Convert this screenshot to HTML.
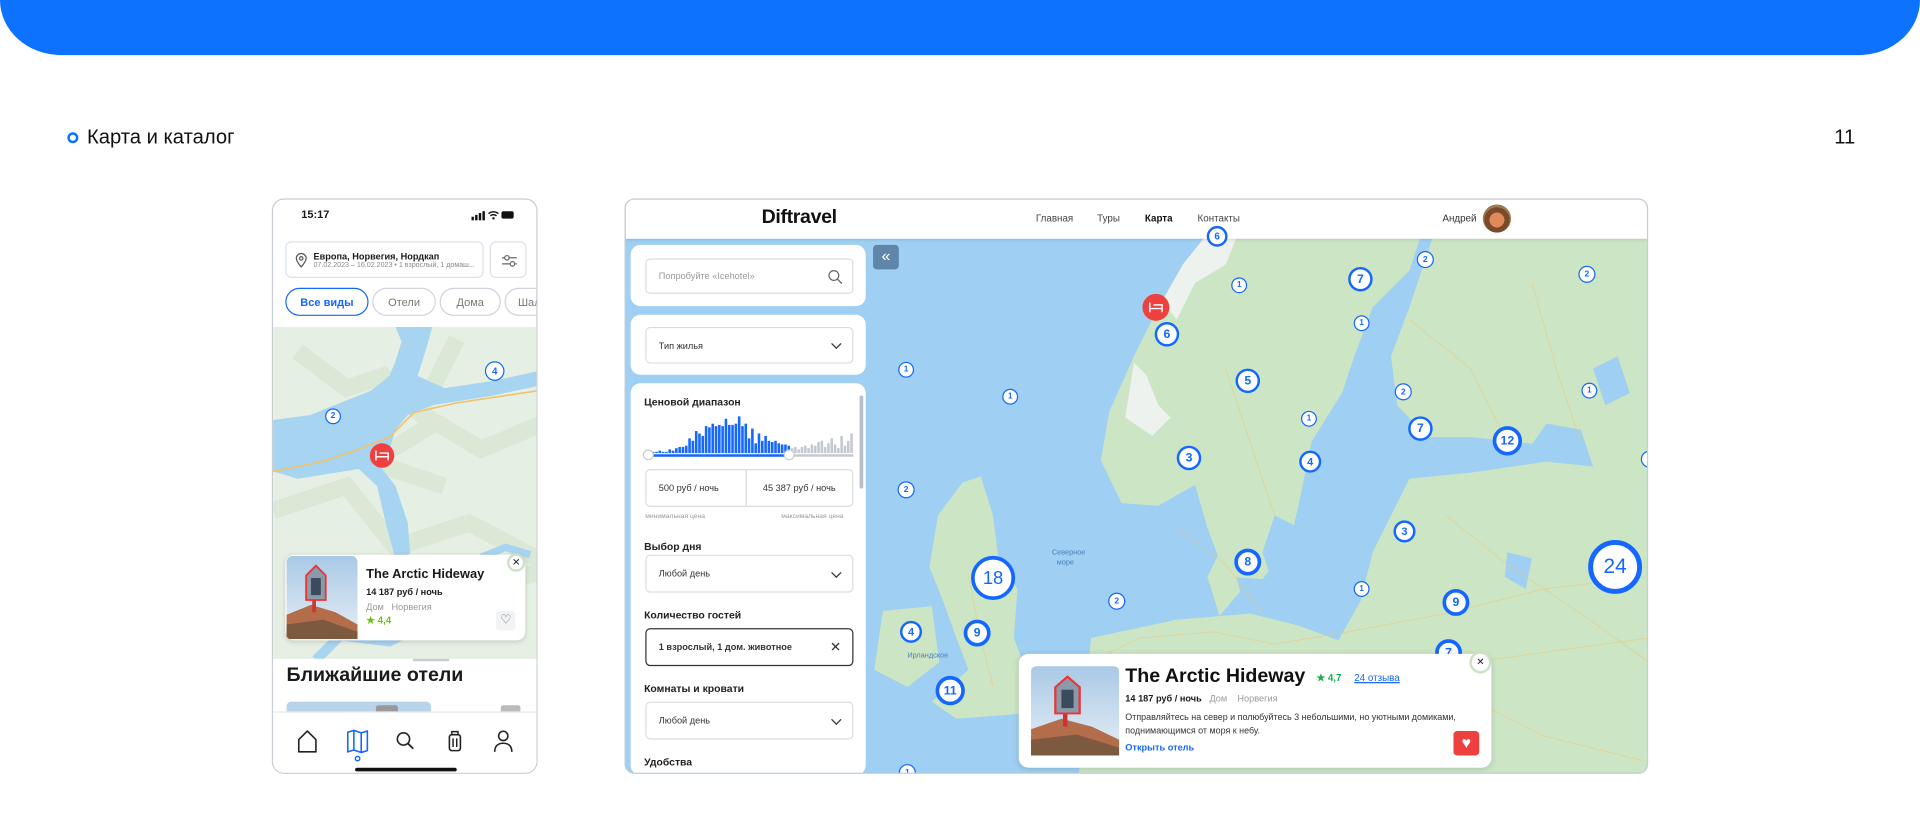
<!DOCTYPE html>
<html><head><meta charset="utf-8">
<style>
*{box-sizing:border-box;margin:0;padding:0}
html,body{width:1920px;height:818px;overflow:hidden;background:#fff;font-family:"Liberation Sans",sans-serif;color:#1a1a1a}
#s{position:absolute;left:0;top:0;width:1568px;height:668px;transform:scale(1.22449);transform-origin:0 0}
.a{position:absolute}
.band{left:0;top:0;width:1568px;height:45px;background:#0d73ff;border-radius:0 0 50px 50px/0 0 45px 45px}
.cl{position:absolute;border-radius:50%;background:#fff;border:2.5px solid #1467ff;color:#1467ff;display:flex;align-items:center;justify-content:center;font-weight:bold;transform:translate(-50%,-50%)}
.lbl{font-size:8.5px;font-weight:bold;color:#222}
.box{position:absolute;border:1px solid #d9dde3;border-radius:4px;background:#fff;font-size:7.5px;color:#333;display:flex;align-items:center;padding-left:10px}
.chev{position:absolute;right:10px;top:50%;width:6px;height:6px;border-right:1.4px solid #333;border-bottom:1.4px solid #333;transform:translateY(-70%) rotate(45deg)}
.panel{position:absolute;left:4px;width:192px;background:#fff;border-radius:8px}
.chip{position:absolute;top:235px;height:23px;border:1px solid #cfd4da;border-radius:12px;font-size:9px;color:#777;display:flex;align-items:center;justify-content:center}
</style></head><body>
<div id="s">
<div class="a band"></div>
<div class="a" style="left:55px;top:108px;width:9px;height:9px;border:2.2px solid #0d73ff;border-radius:50%"></div>
<div class="a" style="left:71px;top:103px;font-size:16.5px;color:#111">Карта и каталог</div>
<div class="a" style="left:1498px;top:103px;font-size:16.5px;color:#111">11</div>

<!-- PHONE -->
<div class="a" style="left:222px;top:162px;width:217px;height:470px;border:1px solid #c8cdd4;border-radius:10px;overflow:hidden;background:#fff">
 <div class="a" style="left:23px;top:7px;font-size:9px;font-weight:bold">15:17</div>
 <svg class="a" style="left:162px;top:8px" width="36" height="9" viewBox="0 0 36 9"><rect x="0" y="6" width="2" height="3" fill="#111"/><rect x="3" y="4.5" width="2" height="4.5" fill="#111"/><rect x="6" y="3" width="2" height="6" fill="#111"/><rect x="9" y="1.5" width="2" height="7.5" fill="#111"/><path d="M14 3.5a6 6 0 0 1 8 0M15.5 5.3a3.5 3.5 0 0 1 5 0" stroke="#111" stroke-width="1.2" fill="none"/><circle cx="18" cy="7.3" r="1" fill="#111"/><rect x="24.5" y="1.5" width="10" height="6" rx="1.5" fill="#111"/></svg>
 <div class="a" style="left:10px;top:34px;width:162px;height:30px;border:1px solid #dde1e6;border-radius:5px">
  <svg class="a" style="left:7px;top:8px" width="10" height="13" viewBox="0 0 10 13"><path d="M5 12C2 8.5 1 6.5 1 5a4 4 0 0 1 8 0c0 1.5-1 3.5-4 7z" fill="none" stroke="#555" stroke-width="1"/><circle cx="5" cy="5" r="1.4" fill="none" stroke="#555" stroke-width="1"/></svg>
  <div class="a" style="left:22px;top:7px;font-size:7.5px;font-weight:bold;white-space:nowrap">Европа, Норвегия, Нордкап</div>
  <div class="a" style="left:22px;top:16px;font-size:5.8px;color:#888;white-space:nowrap">07.02.2023 – 16.02.2023 • 1 взрослый, 1 домаш...</div>
 </div>
 <div class="a" style="left:177px;top:34px;width:30px;height:30px;border:1px solid #dde1e6;border-radius:5px">
  <svg class="a" style="left:8px;top:9px" width="14" height="12" viewBox="0 0 14 12"><path d="M1 3.5h12M1 8.5h12" stroke="#666" stroke-width="1"/><circle cx="5" cy="3.5" r="1.8" fill="#fff" stroke="#666"/><circle cx="9.5" cy="8.5" r="1.8" fill="#fff" stroke="#666"/></svg>
 </div>
 <div class="chip" style="left:10px;width:68px;border:1.5px solid #1467ff;color:#1467ff;font-weight:bold;top:72px">Все виды</div>
 <div class="chip" style="left:81px;width:52px;top:72px">Отели</div>
 <div class="chip" style="left:136px;width:50px;top:72px">Дома</div>
 <div class="chip" style="left:189px;width:50px;top:72px;justify-content:flex-start;padding-left:10px">Шале</div>
 <svg class="a" style="left:0;top:104px" width="217" height="272" viewBox="0 0 217 272">
  <rect width="217" height="272" fill="#e6efe3"/>
  <path d="M20 20l40 30 30-10 40 40-50 30 60 20M150 10l-30 60 50 30 47-20M0 150l60-20 40 50 60-20 57 30M30 230l50-30 70 20 67-20" stroke="#d6e6d0" stroke-width="14" fill="none" opacity=".7"/>
  <path d="M0 76 L30 72 55 62 80 52 95 40 100 28 105 12 100 0 130 0 125 18 118 40 140 50 180 44 217 36 217 48 180 56 130 64 110 72 100 84 95 100 86 112 100 130 110 160 112 185 100 190 92 160 85 130 70 116 45 120 20 124 0 118Z" fill="#a7d4f0"/>
  <path d="M0 118 L40 110 70 100 95 90 115 70 150 62 217 52" stroke="#f2c26a" stroke-width="1.3" fill="none"/>
  <path d="M170 188 l20 -8 20 6" stroke="#a7d4f0" stroke-width="6" fill="none"/>
  <path d="M35 272 l20-20 40 5 30-15 60 5" stroke="#a7d4f0" stroke-width="8" fill="none"/>
 </svg>
 <div class="cl" style="left:181px;top:140px;width:16px;height:16px;font-size:8px;border-width:1.8px">4</div>
 <div class="cl" style="left:49px;top:177px;width:13px;height:13px;font-size:7px;border-width:1.5px">2</div>
 <div class="a" style="left:79px;top:199px;width:20px;height:20px;border-radius:50%;background:#ef4040"></div>
 <svg class="a" style="left:83px;top:204px" width="12" height="10" viewBox="0 0 12 10"><path d="M1 1v8M1 6h10v3M4 3h7v3" stroke="#fff" stroke-width="1.2" fill="none"/></svg>
 <div class="a" style="left:10px;top:290px;width:196px;height:70px;background:#fff;border-radius:7px;box-shadow:0 1px 4px rgba(0,0,0,.15);overflow:hidden">
  <svg class="a" style="left:1px;top:1px" width="58" height="68" viewBox="0 0 58 68"><defs><linearGradient id="sk" x1="0" y1="0" x2="0" y2="1"><stop offset="0" stop-color="#a9c9e6"/><stop offset="1" stop-color="#e6eef5"/></linearGradient></defs><rect width="58" height="68" rx="5" fill="url(#sk)"/><path d="M0 48 20 40 40 46 58 56 58 68 0 68Z" fill="#b46d4a"/><path d="M0 56 30 52 58 62 58 68 0 68Z" fill="#7d5a3f"/><rect x="21" y="36" width="3" height="10" fill="#c33"/><path d="M16 16 24 8 32 16 32 36 16 36Z" fill="#8a9aab" stroke="#e33" stroke-width="1.5"/><path d="M20 18h8v14h-8z" fill="#3b4a5c"/></svg>
  <div class="a" style="left:66px;top:10px;font-size:10.5px;font-weight:bold">The Arctic Hideway</div>
  <div class="a" style="left:66px;top:26px;font-size:7.5px;font-weight:bold">14 187 руб / ночь</div>
  <div class="a" style="left:66px;top:38px;font-size:7.5px;color:#999">Дом &nbsp; Норвегия</div>
  <div class="a" style="left:66px;top:49px;font-size:8px;font-weight:bold;color:#6bbf1a">★ 4,4</div>
  <div class="a" style="left:172px;top:46px;width:16px;height:16px;background:#f2f3f5;border-radius:3px;color:#666;font-size:10px;text-align:center;line-height:16px">♡</div>
 </div>
 <div class="a" style="left:191px;top:289px;width:15px;height:15px;border-radius:50%;background:#fff;border:2px solid #cfe0c9;font-size:8px;text-align:center;line-height:11px;color:#222">✕</div>
 <div class="a" style="left:0;top:375px;width:217px;height:100px;background:#fff"></div>
 <div class="a" style="left:114px;top:375px;width:30px;height:2px;background:#c9ccd2;border-radius:1px"></div>
 <div class="a" style="left:11px;top:380px;font-size:16px;font-weight:bold;color:#1a1a1a">Ближайшие отели</div>
 <div class="a" style="left:11px;top:410px;width:118px;height:10px;background:#b9d3ea;border-radius:4px 4px 0 0"></div>
 <div class="a" style="left:84px;top:413px;width:18px;height:7px;background:#999;border-radius:2px"></div>
 <div class="a" style="left:186px;top:413px;width:16px;height:7px;background:#bbb;border-radius:2px"></div>
 <div class="a" style="left:0;top:418px;width:217px;height:60px;background:#fff;border-top:1px solid #e6e8eb"></div>
 <svg class="a" style="left:0;top:418px" width="217" height="52" viewBox="0 0 217 52">
  <path d="M21 23 28 16 35 23 35 33 21 33Z" stroke="#222" stroke-width="1.3" fill="none" stroke-linejoin="round"/>
  <path d="M61 17 66 15.5 72 17.5 77 16 77 32 72 33.5 66 31.5 61 33Z M66 15.5v16M72 17.5v16" stroke="#1467ff" stroke-width="1.3" fill="none" stroke-linejoin="round"/>
  <circle cx="69" cy="38.5" r="1.8" fill="none" stroke="#1467ff" stroke-width="1.2"/>
  <circle cx="106.5" cy="22.5" r="5" stroke="#222" stroke-width="1.3" fill="none"/><path d="M110 26l4.5 4.5" stroke="#222" stroke-width="1.5"/>
  <rect x="144" y="19" width="9" height="13" rx="2" stroke="#222" stroke-width="1.3" fill="none"/><path d="M146 19v-2.5h5V19M147 22v7M150 22v7" stroke="#222" stroke-width="1.2" fill="none"/>
  <circle cx="188" cy="20" r="3.8" stroke="#222" stroke-width="1.3" fill="none"/><path d="M181 33c0-5 3-7 7-7s7 2 7 7" stroke="#222" stroke-width="1.3" fill="none"/>
 </svg>
 <div class="a" style="left:67px;top:464px;width:83px;height:3px;background:#111;border-radius:2px"></div>
</div>

<!-- DESKTOP -->
<div class="a" style="left:510px;top:162px;width:836px;height:470px;border:1px solid #c8cdd4;border-radius:8px;overflow:hidden;background:#a4d1f1">
 <svg class="a" style="left:0;top:0" width="836" height="470" viewBox="510 162 836 470">
  <rect x="510" y="162" width="836" height="470" fill="#9fcff2"/>
  <path d="M985 190 965 215 945 250 925 290 905 335 898 375 915 410 945 412 975 395 985 430 1000 470 1030 472 1052 445 1062 400 1070 360 1095 320 1105 290 1120 250 1150 220 1160 190Z" fill="#cbe5c5"/>
  <path d="M985 190 965 215 948 245 960 260 975 230 1000 215 1010 190Z M925 295 935 305 945 330 955 340 940 355 918 340Z" fill="#eef2ee"/>
  <path d="M1170 190 1346 190 1346 632 880 632 890 520 960 505 1020 500 1060 510 1092 522 1110 490 1120 450 1140 410 1150 390 1200 385 1262 376 1256 362 1200 356 1165 356 1140 330 1135 290 1150 250Z" fill="#cbe5c5"/>
  <path d="M1040 420 1060 430 1058 470 1040 480 1030 450Z" fill="#9fcff2"/>
  <path d="M1262 376 1300 380 1290 350 1262 345 1250 362Z M1300 300 1320 290 1330 320 1310 330Z M1230 450 1250 455 1245 480 1228 470Z" fill="#9fcff2"/>
  <path d="M985 470 1000 440 1012 482 995 502Z" fill="#cbe5c5"/>
  <path d="M785 393 800 388 810 420 815 460 830 480 827 520 842 560 832 582 780 586 760 572 790 546 780 520 770 492 758 462 765 420Z" fill="#cbe5c5"/>
  <path d="M720 498 760 494 766 540 740 560 713 546Z" fill="#cbe5c5"/>
  <g stroke="#f0c777" stroke-width=".6" fill="none" opacity=".7">
  <path d="M888 540 930 520 990 515 1040 525 1100 515 1180 500 1260 480 1346 470M900 580 960 560 1040 560 1120 545 1200 540 1346 520M1180 420 1230 460 1290 500 1346 540M1150 260 1200 300 1230 360M960 430 1000 460 1030 500M790 470 800 520 810 560"/>
  <path d="M1000 300 1020 360 1040 420M1250 230 1270 300 1290 360M1180 560 1260 600 1340 620"/></g>
  <text x="858" y="452" font-size="6" fill="#4a7fbf" font-family="Liberation Sans">Северное</text><text x="862" y="460" font-size="6" fill="#4a7fbf" font-family="Liberation Sans">море</text>
  <text x="740" y="536" font-size="6" fill="#4a7fbf" font-family="Liberation Sans">Ирландское</text>
 </svg>
 <div class="a" style="left:0;top:0;width:836px;height:32px;background:#fff;box-shadow:0 1px 3px rgba(0,0,0,.12)"></div>
 <div class="a" style="left:111px;top:6px;font-size:16px;font-weight:bold;letter-spacing:-.3px;color:#111">Diftravel</div>
 <div class="a" style="left:335px;top:11px;font-size:8px;color:#444">Главная</div>
 <div class="a" style="left:385px;top:11px;font-size:8px;color:#444">Туры</div>
 <div class="a" style="left:424px;top:11px;font-size:8px;color:#111;font-weight:bold">Карта</div>
 <div class="a" style="left:467px;top:11px;font-size:8px;color:#444">Контакты</div>
 <div class="a" style="left:667px;top:11px;font-size:8px;color:#333">Андрей</div>
 <div class="a" style="left:700px;top:4px;width:23px;height:23px;border-radius:50%;background:radial-gradient(circle at 50% 55%,#e08a5a 0 35%,#7a4a2a 36% 60%,#9b7b4f 61%)"></div>
 <div class="cl" style="left:483px;top:30px;width:17px;height:17px;font-size:8px">6</div>
 <div class="cl" style="left:653px;top:49px;width:14px;height:14px;font-size:7px;border-width:1.6px">2</div>
 <div class="cl" style="left:600px;top:65px;width:20px;height:20px;font-size:10px">7</div>
 <div class="cl" style="left:785px;top:61px;width:14px;height:14px;font-size:7px;border-width:1.6px">2</div>
 <div class="cl" style="left:501px;top:70px;width:13px;height:13px;font-size:6.5px;border-width:1.5px">1</div>
 <div class="cl" style="left:601px;top:101px;width:13px;height:13px;font-size:6.5px;border-width:1.5px">1</div>
 <div class="a" style="left:422px;top:77px;width:22px;height:22px;border-radius:50%;background:#ef4040"></div>
 <svg class="a" style="left:427px;top:83px" width="12" height="10" viewBox="0 0 12 10"><path d="M1 1v8M1 6h10v3M4 3h7v3" stroke="#fff" stroke-width="1.2" fill="none"/></svg>
 <div class="cl" style="left:442px;top:110px;width:20px;height:20px;font-size:10px">6</div>
 <div class="cl" style="left:229px;top:139px;width:13px;height:13px;font-size:6.5px;border-width:1.5px">1</div>
 <div class="cl" style="left:314px;top:161px;width:13px;height:13px;font-size:6.5px;border-width:1.5px">1</div>
 <div class="cl" style="left:508px;top:148px;width:20px;height:20px;font-size:10px">5</div>
 <div class="cl" style="left:635px;top:157px;width:14px;height:14px;font-size:7px;border-width:1.6px">2</div>
 <div class="cl" style="left:787px;top:156px;width:13px;height:13px;font-size:6.5px;border-width:1.5px">1</div>
 <div class="cl" style="left:558px;top:179px;width:13px;height:13px;font-size:6.5px;border-width:1.5px">1</div>
 <div class="cl" style="left:649px;top:187px;width:20px;height:20px;font-size:10px">7</div>
 <div class="cl" style="left:720px;top:197px;width:24px;height:24px;font-size:10px;border-width:3px">12</div>
 <div class="cl" style="left:460px;top:211px;width:20px;height:20px;font-size:10px">3</div>
 <div class="cl" style="left:559px;top:214px;width:18px;height:18px;font-size:9px">4</div>
 <div class="cl" style="left:836px;top:212px;width:14px;height:14px;font-size:7px;border-width:1.6px"></div>
 <div class="cl" style="left:229px;top:237px;width:14px;height:14px;font-size:7px;border-width:1.6px">2</div>
 <div class="cl" style="left:636px;top:271px;width:18px;height:18px;font-size:9px">3</div>
 <div class="cl" style="left:300px;top:309px;width:36px;height:36px;font-size:15px;border-width:3.5px;font-weight:normal">18</div>
 <div class="cl" style="left:508px;top:296px;width:22px;height:22px;font-size:10px;border-width:3px">8</div>
 <div class="cl" style="left:808px;top:300px;width:44px;height:44px;font-size:17px;border-width:4px;font-weight:normal">24</div>
 <div class="cl" style="left:401px;top:328px;width:14px;height:14px;font-size:7px;border-width:1.6px">2</div>
 <div class="cl" style="left:601px;top:318px;width:13px;height:13px;font-size:6.5px;border-width:1.5px">1</div>
 <div class="cl" style="left:678px;top:329px;width:22px;height:22px;font-size:10px;border-width:3px">9</div>
 <div class="cl" style="left:233px;top:353px;width:18px;height:18px;font-size:9px">4</div>
 <div class="cl" style="left:287px;top:354px;width:22px;height:22px;font-size:10px;border-width:3px">9</div>
 <div class="cl" style="left:265px;top:401px;width:24px;height:24px;font-size:10px;border-width:3px">11</div>
 <div class="cl" style="left:672px;top:370px;width:22px;height:22px;font-size:10px;border-width:3px">7</div>
 <div class="cl" style="left:230px;top:468px;width:14px;height:14px;font-size:7px;border-width:1.6px">1</div>
 <div class="a" style="left:202px;top:37px;width:21px;height:20px;background:#5f86a8;border-radius:3px;color:#fff;font-size:13px;text-align:center;line-height:18px">«</div>
 <div class="panel" style="top:37px;height:50px">
  <div class="box" style="left:12px;top:11px;width:170px;height:29px;color:#999">Попробуйте «Icehotel»
   <svg class="a" style="right:8px;top:8px" width="12" height="12" viewBox="0 0 12 12"><circle cx="5" cy="5" r="4" stroke="#666" fill="none"/><path d="M8 8l3.5 3.5" stroke="#666" stroke-width="1.1"/></svg></div>
 </div>
 <div class="panel" style="top:94px;height:49px">
  <div class="box" style="left:12px;top:10px;width:170px;height:30px">Тип жилья<div class="chev"></div></div>
 </div>
 <div class="panel" style="top:150px;height:320px;overflow:hidden">
  <div class="a" style="left:187px;top:10px;width:3px;height:76px;background:#b8bec6;border-radius:2px"></div>
  <div class="a lbl" style="left:11px;top:10px">Ценовой диапазон</div>
  <svg id="hist" class="a" style="left:0;top:25px" width="192" height="40"></svg>
  <div class="a" style="left:14px;top:58px;width:168px;height:2px;background:#c4c9cf"></div>
  <div class="a" style="left:14px;top:58px;width:116px;height:2px;background:#1467ff"></div>
  <div class="a" style="left:10px;top:54px;width:9px;height:9px;border-radius:50%;background:#fff;border:1px solid #ccc"></div>
  <div class="a" style="left:125px;top:54px;width:9px;height:9px;border-radius:50%;background:#fff;border:1px solid #ccc"></div>
  <div class="box" style="left:12px;top:70px;width:83px;height:31px;border-radius:4px 0 0 4px">500 руб / ночь</div>
  <div class="box" style="left:94px;top:70px;width:88px;height:31px;border-radius:0 4px 4px 0;padding-left:13px">45 387 руб / ночь</div>
  <div class="a" style="left:12px;top:106px;font-size:5.5px;color:#999">минимальная цена</div>
  <div class="a" style="left:123px;top:106px;font-size:5.5px;color:#999">максимальная цена</div>
  <div class="a lbl" style="left:11px;top:128px">Выбор дня</div>
  <div class="box" style="left:12px;top:140px;width:170px;height:31px">Любой день<div class="chev"></div></div>
  <div class="a lbl" style="left:11px;top:184px">Количество гостей</div>
  <div class="box" style="left:12px;top:200px;width:170px;height:31px;border-color:#333;font-weight:bold">1 взрослый, 1 дом. животное<span class="a" style="right:9px;top:8px;font-size:11px;font-weight:normal">✕</span></div>
  <div class="a lbl" style="left:11px;top:244px">Комнаты и кровати</div>
  <div class="box" style="left:12px;top:260px;width:170px;height:31px">Любой день<div class="chev"></div></div>
  <div class="a lbl" style="left:11px;top:304px">Удобства</div>
 </div>
 <div class="a" style="left:321px;top:371px;width:386px;height:93px;background:#fff;border-radius:8px;box-shadow:0 1px 5px rgba(0,0,0,.15)">
  <svg class="a" style="left:10px;top:10px" width="72" height="73" viewBox="0 0 58 68" preserveAspectRatio="none"><rect width="58" height="68" rx="4" fill="url(#sk)"/><path d="M0 48 20 40 40 46 58 56 58 68 0 68Z" fill="#b46d4a"/><path d="M0 56 30 52 58 62 58 68 0 68Z" fill="#7d5a3f"/><rect x="21" y="36" width="3" height="10" fill="#c33"/><path d="M16 16 24 8 32 16 32 36 16 36Z" fill="#8a9aab" stroke="#e33" stroke-width="1.5"/><path d="M20 18h8v14h-8z" fill="#3b4a5c"/></svg>
  <div class="a" style="left:87px;top:10px;font-size:16px;font-weight:bold;color:#111">The Arctic Hideway</div>
  <div class="a" style="left:243px;top:15px;font-size:8px;font-weight:bold;color:#1aae4d">★ 4,7</div>
  <div class="a" style="left:274px;top:15px;font-size:8px;color:#1467ff;text-decoration:underline">24 отзыва</div>
  <div class="a" style="left:87px;top:32px;font-size:7.5px;font-weight:bold">14 187 руб / ночь <span style="font-weight:normal;color:#999">&nbsp; Дом &nbsp;&nbsp; Норвегия</span></div>
  <div class="a" style="left:87px;top:46px;font-size:7.3px;color:#333;line-height:11px;width:270px">Отправляйтесь на север и полюбуйтесь 3 небольшими, но уютными домиками, поднимающимся от моря к небу.</div>
  <div class="a" style="left:87px;top:72px;font-size:7.5px;font-weight:bold;color:#1467ff">Открыть отель</div>
  <div class="a" style="left:355px;top:63px;width:21px;height:20px;background:#ef4040;border-radius:3px;color:#fff;font-size:13px;text-align:center;line-height:20px">♥</div>
 </div>
 <div class="a" style="left:689px;top:369px;width:18px;height:18px;border-radius:50%;background:#fff;border:2px solid #cfe0c9;font-size:8px;text-align:center;line-height:14px;color:#222">✕</div>
</div>
</div>
<script>
var h=[1,1,1,1,2,1,1,3,2,4,5,5,6,12,10,18,16,14,22,21,24,22,23,22,28,23,23,24,30,22,24,12,20,8,16,10,14,10,9,10,8,7,7,6,4,5,3,5,6,4,7,6,9,10,5,8,12,7,4,14,6,10,16];
var s='';for(var i=0;i<h.length;i++){var x=12+i*2.7;s+='<rect x="'+x+'" y="'+(32-h[i])+'" width="2.1" height="'+h[i]+'" fill="'+(i<44?'#1467ff':'#c4c9cf')+'"/>';}
document.getElementById('hist').innerHTML=s;
</script>
</body></html>
